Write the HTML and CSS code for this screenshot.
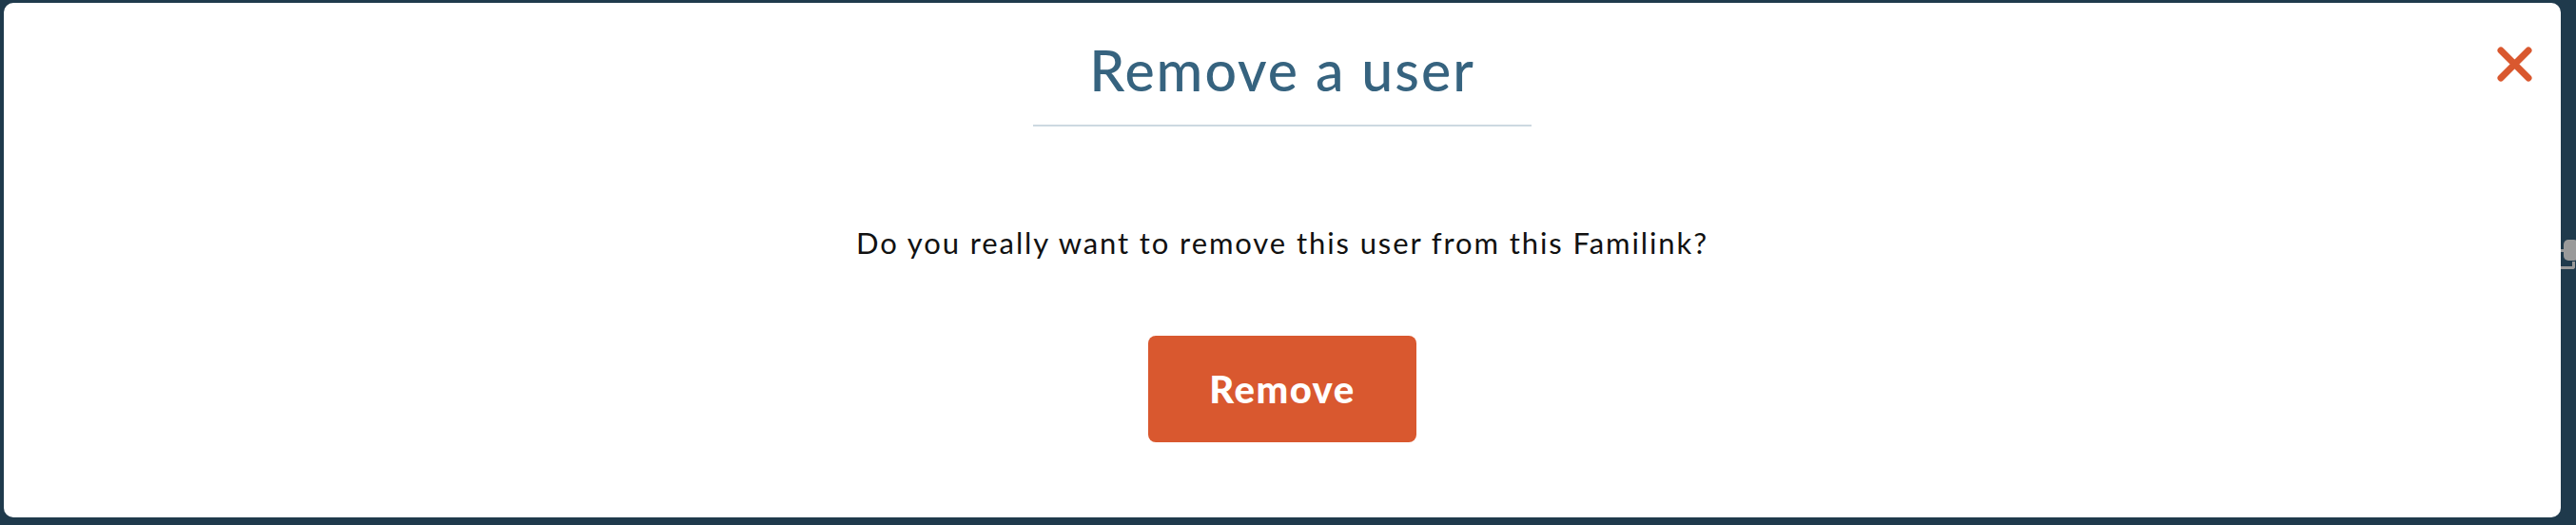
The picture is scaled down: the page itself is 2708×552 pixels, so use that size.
FILE: index.html
```html
<!DOCTYPE html>
<html lang="en">
<head>
<meta charset="utf-8">
<title>Remove a user</title>
<link rel="stylesheet" href="styles.css">
</head>
<body>
<div class="widget"><span class="widget-tick"></span><span class="widget-box"></span><span class="widget-hook"></span></div>
<div class="modal">
  <button class="close" aria-label="Close">
    <svg width="37" height="37" viewBox="0 0 37 37"><path d="M4 4 L33 33 M33 4 L4 33" stroke="#d9582f" stroke-width="7" stroke-linecap="round" fill="none"/></svg>
  </button>
  <h2 class="title">Remove a user</h2>
  <p class="message">Do you really want to remove this user from this Familink?</p>
  <button class="remove">Remove</button>
</div>
</body>
</html>
```
FILE: styles.css
```css
html, body {
  margin: 0;
  padding: 0;
}
body {
  background: #1f3a4c;
  width: 2708px;
  height: 552px;
  overflow: hidden;
  position: relative;
  font-family: "Lato", "Noto Sans", sans-serif;
}
.modal {
  position: relative;
  box-sizing: border-box;
  margin: 3px 16px 0 4px;
  width: 2688px;
  height: 541px;
  background: #fff;
  border-radius: 10px;
  display: flex;
  flex-direction: column;
  align-items: center;
  padding-top: 36px;
}
.title {
  margin: 0;
  width: 524px;
  text-align: center;
  font-size: 59px;
  font-weight: 500;
  letter-spacing: 2px;
  line-height: 70px;
  color: #36637f;
  padding-bottom: 22px;
  border-bottom: 2px solid #cdd9e1;
}
.message {
  margin: 102px 0 0;
  font-size: 31px;
  letter-spacing: 1.9px;
  line-height: 40px;
  color: #111;
}
.remove {
  margin-top: 78px;
  width: 282px;
  height: 112px;
  border: none;
  border-radius: 8px;
  background: #d9582f;
  color: #fff;
  font-family: "Lato", "Noto Sans", sans-serif;
  font-size: 40px;
  font-weight: 900;
  letter-spacing: 1.5px;
  cursor: pointer;
}
.close {
  position: absolute;
  top: 46px;
  right: 30px;
  width: 37px;
  height: 37px;
  padding: 0;
  border: none;
  background: none;
  display: block;
}
.close svg { display: block; }
.widget {
  position: absolute;
  left: 2692px;
  top: 250px;
  width: 16px;
  height: 40px;
}
.widget-tick {
  position: absolute;
  left: 0;
  top: 12px;
  width: 3px;
  height: 3px;
  background: #9a9a9a;
}
.widget-box {
  position: absolute;
  left: 3px;
  top: 2px;
  width: 16px;
  height: 22px;
  border-radius: 5px;
  background: #9a9a9a;
}
.widget-hook {
  position: absolute;
  left: 0;
  top: 25px;
  width: 12px;
  height: 5px;
  border-right: 3px solid #9a9a9a;
  border-bottom: 3px solid #9a9a9a;
  border-bottom-right-radius: 3px;
}
```
